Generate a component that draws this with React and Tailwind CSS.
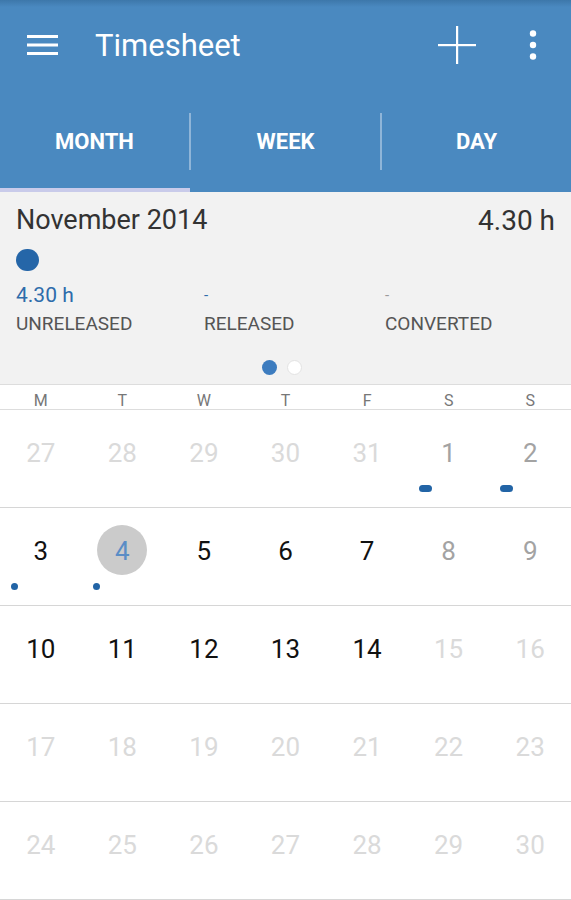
const weekdays = ['M', 'T', 'W', 'T', 'F', 'S', 'S'];

// tone: past = previous month, dim = weekend, day = working day, future, today
const weeks = [
  [
    { n: 27, tone: 'past' }, { n: 28, tone: 'past' }, { n: 29, tone: 'past' }, { n: 30, tone: 'past' },
    { n: 31, tone: 'past' }, { n: 1, tone: 'dim', mark: 'pill' }, { n: 2, tone: 'dim', mark: 'pill' },
  ],
  [
    { n: 3, tone: 'day', mark: 'dot' }, { n: 4, tone: 'today', mark: 'dot' }, { n: 5, tone: 'day' }, { n: 6, tone: 'day' },
    { n: 7, tone: 'day' }, { n: 8, tone: 'dim' }, { n: 9, tone: 'dim' },
  ],
  [
    { n: 10, tone: 'day' }, { n: 11, tone: 'day' }, { n: 12, tone: 'day' }, { n: 13, tone: 'day' },
    { n: 14, tone: 'day' }, { n: 15, tone: 'future' }, { n: 16, tone: 'future' },
  ],
  [17, 18, 19, 20, 21, 22, 23].map((n) => ({ n, tone: 'future' })),
  [24, 25, 26, 27, 28, 29, 30].map((n) => ({ n, tone: 'future' })),
];

const toneClass = {
  past: 'text-[#dadada]',
  future: 'text-[#dadada]',
  dim: 'text-[#a3a3a3]',
  day: 'text-[#111111]',
  today: 'text-[#5a8dc6] bg-[#cbcbcb]',
};

function DayCell({ day }) {
  return (
    <div className="flex flex-col">
      <div className="flex justify-center pt-[17px]">
        <div className={`w-[50px] h-[50px] rounded-full flex items-center justify-center text-[26px] pt-[2px] ${toneClass[day.tone]}`}>
          {day.n}
        </div>
      </div>
      <div className="h-[7px] mt-[8px] ml-[11px]">
        {day.mark === 'pill' ? <div className="w-[13px] h-[7px] rounded-full bg-[#2264a6]" /> : null}
        {day.mark === 'dot' ? <div className="w-[7px] h-[7px] rounded-full bg-[#2264a6]" /> : null}
      </div>
    </div>
  );
}

export default function App() {
  return (
    <div className="w-[571px] h-[900px] overflow-hidden bg-white font-['Roboto','Liberation_Sans',sans-serif]">
      <div className="bg-[#4a89c0] bg-[linear-gradient(to_bottom,#3d77aa_0px,#4a89c0_7px)]">
        <div className="h-[90px] flex items-center pl-[27px] pr-[34px] text-white">
          <svg width="31" height="20" viewBox="0 0 31 20" className="shrink-0">
            <rect x="0" y="0" width="31" height="3" fill="white" />
            <rect x="0" y="8.5" width="31" height="3" fill="white" />
            <rect x="0" y="17" width="31" height="3" fill="white" />
          </svg>
          <span className="ml-[37px] text-[31px] leading-none mt-[1px]">Timesheet</span>
          <svg width="38" height="38" viewBox="0 0 38 38" className="ml-auto shrink-0">
            <rect x="18" y="0" width="2.2" height="38" fill="white" />
            <rect x="0" y="18" width="38" height="2.2" fill="white" />
          </svg>
          <svg width="8" height="30" viewBox="0 0 8 30" className="ml-[53px] shrink-0">
            <circle cx="4" cy="3.5" r="3.2" fill="white" />
            <circle cx="4" cy="15" r="3.2" fill="white" />
            <circle cx="4" cy="26.5" r="3.2" fill="white" />
          </svg>
        </div>
        <div className="flex h-[98px] pt-[4px] items-center text-white text-[22px] font-bold">
          <div className="flex-1 text-center">MONTH</div>
          <div className="w-[2px] h-[57px] bg-[#8fb5d8]" />
          <div className="flex-1 text-center">WEEK</div>
          <div className="w-[2px] h-[57px] bg-[#8fb5d8]" />
          <div className="flex-1 text-center">DAY</div>
        </div>
        <div className="flex h-[4px]">
          <div className="w-[190px] bg-[#c9cbea]" />
        </div>
      </div>

      <div className="bg-[#f2f2f2] px-[16px] pt-[14px] pb-[10px] h-[192px]">
        <div className="flex justify-between items-center h-[28px] text-[#333333]">
          <span className="text-[27px]">November 2014</span>
          <span className="text-[28px] mt-[2px]">4.30 h</span>
        </div>
        <div className="mt-[15px] w-[23px] h-[22px] rounded-full bg-[#2566a8]" />
        <div className="mt-[13px] grid grid-cols-[188px_181px_1fr]">
          <div>
            <div className="h-[22px] text-[21px] leading-[22px] text-[#2e6cab]">4.30 h</div>
            <div className="mt-[8px] h-[20px] text-[19px] leading-[20px] text-[#555555]">UNRELEASED</div>
          </div>
          <div>
            <div className="h-[22px] text-[15px] leading-[22px] text-[#2e6cab]">-</div>
            <div className="mt-[8px] h-[20px] text-[19px] leading-[20px] text-[#555555]">RELEASED</div>
          </div>
          <div>
            <div className="h-[22px] text-[15px] leading-[22px] text-[#9a9a9a]">-</div>
            <div className="mt-[8px] h-[20px] text-[19px] leading-[20px] text-[#555555]">CONVERTED</div>
          </div>
        </div>
        <div className="mt-[26px] flex justify-center gap-[10px] pr-[8px]">
          <div className="w-[15px] h-[15px] rounded-full bg-[#3d7cbf]" />
          <div className="w-[15px] h-[15px] rounded-full bg-white border border-[#e3e3e3]" />
        </div>
      </div>

      <div className="grid grid-cols-7 h-[26px] pt-[4px] items-center border-y border-[#dddddd] text-[16px] text-[#777777]">
        {weekdays.map((d, i) => (
          <div key={i} className="text-center">{d}</div>
        ))}
      </div>

      {weeks.map((week, i) => (
        <div key={i} className="grid grid-cols-7 h-[98px] border-b border-[#d6d6d6]">
          {week.map((day, j) => (
            <DayCell key={j} day={day} />
          ))}
        </div>
      ))}
    </div>
  );
}
